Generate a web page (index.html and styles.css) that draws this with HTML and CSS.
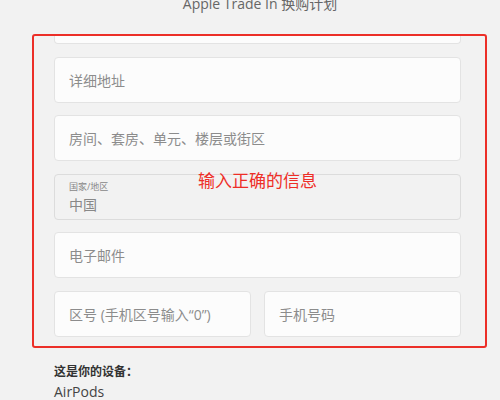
FILE: index.html
```html
<!DOCTYPE html>
<html lang="zh-CN">
<head>
<meta charset="utf-8">
<title>Apple Trade In</title>
<link rel="stylesheet" href="styles.css">
</head>
<body>
<div class="page">
  <div class="title">Apple Trade In 换购计划</div>
  <div class="annot">
    <div class="field-tail"></div>
    <div class="field"><span class="ph">详细地址</span></div>
    <div class="field"><span class="ph">房间、套房、单元、楼层或街区</span></div>
    <div class="field field-ro"><span class="lbl">国家/地区</span><span class="val">中国</span></div>
    <div class="field"><span class="ph">电子邮件</span></div>
    <div class="row">
      <div class="field"><span class="ph">区号 (手机区号输入“0”)</span></div>
      <div class="field"><span class="ph">手机号码</span></div>
    </div>
    <div class="note">输入正确的信息</div>
  </div>
  <div class="device">
    <div class="device-label">这是你的设备：</div>
    <div class="device-name">AirPods</div>
  </div>
</div>
</body>
</html>
```
FILE: styles.css
```css
html, body {
  margin: 0;
  background: #f2f2f2;
  font-family: "Open Sans", "Noto Sans CJK SC", sans-serif;
}
.page {
  height: 400px;
  overflow: hidden;
}
.title {
  margin-top: -5px;
  height: 18px;
  line-height: 18px;
  padding-left: 20px;
  text-align: center;
  font-size: 14px;
  color: #666;
}
.annot {
  position: relative;
  margin: 21px 0 0 32px;
  width: 455px;
  box-sizing: border-box;
  border: 2px solid #ec2f28;
  border-radius: 3px;
  padding: 0 24px 9px 20px;
  display: flex;
  flex-direction: column;
  gap: 12.5px;
}
.field-tail {
  height: 8px;
  box-sizing: border-box;
  border: 1px solid #e3e3e3;
  border-top: 0;
  border-radius: 0 0 4px 4px;
  background: #fcfcfc;
}
.field {
  height: 46px;
  box-sizing: border-box;
  border: 1px solid #e3e3e3;
  border-radius: 4px;
  background: #fcfcfc;
  display: flex;
  align-items: center;
  padding-left: 14px;
}
.ph {
  font-size: 14px;
  color: #8c8c8c;
}
.field-ro {
  background: #f2f2f2;
  border-color: #dcdcdc;
  flex-direction: column;
  align-items: flex-start;
  justify-content: center;
  gap: 3px;
  padding-top: 2px;
}
.lbl {
  font-size: 9px;
  line-height: 12px;
  color: #888;
}
.val {
  font-size: 14px;
  line-height: 18px;
  color: #888;
}
.row {
  display: flex;
  gap: 13px;
}
.row .field {
  flex: 1;
}
.note {
  position: absolute;
  left: 164px;
  top: 136px;
  font-size: 17px;
  line-height: 17px;
  color: #ee2e27;
}
.device {
  margin: 14px 0 0 54px;
}
.device-label {
  font-size: 12px;
  font-weight: bold;
  line-height: 20px;
  color: #333;
}
.device-name {
  font-size: 14px;
  line-height: 20px;
  color: #444;
}
```
